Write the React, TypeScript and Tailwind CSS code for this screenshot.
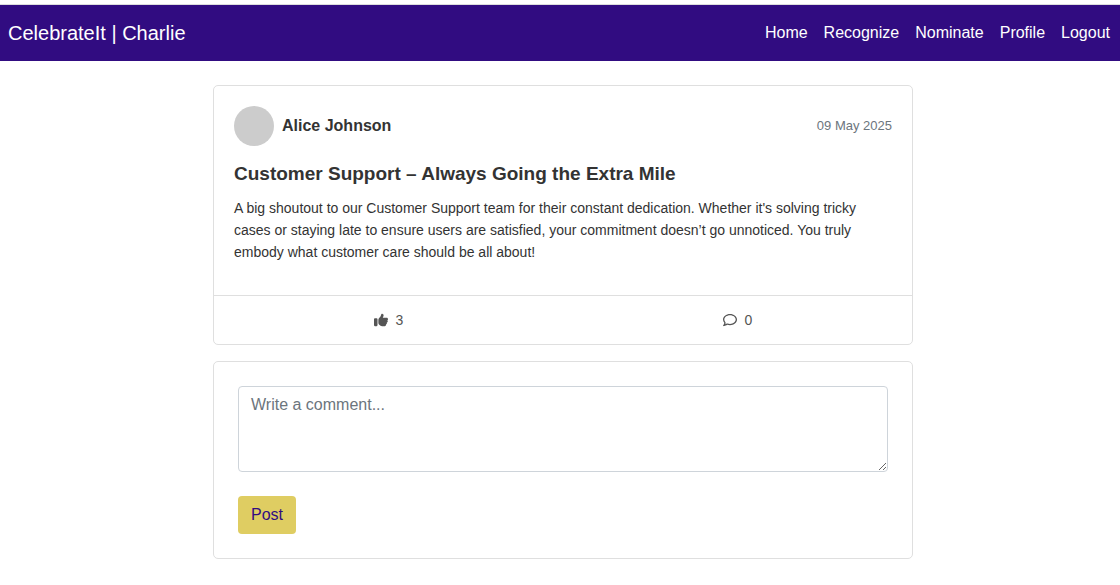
import { FaThumbsUp, FaRegComment } from "react-icons/fa6";

const links = ["Home", "Recognize", "Nominate", "Profile", "Logout"];

function Navbar() {
  return (
    <header className="flex items-center justify-between border-t border-[#dddddd] bg-[#310c81] px-2 py-3 text-white">
      <a href="#" className="text-xl leading-8">CelebrateIt | Charlie</a>
      <nav className="flex gap-4 pr-0.5">
        {links.map((l) => (
          <a key={l} href="#" className="text-base">{l}</a>
        ))}
      </nav>
    </header>
  );
}

function Post() {
  return (
    <article className="rounded-[5px] border border-[#dfdfdf] bg-white text-[#333333]">
      <div className="px-5 pt-5 pb-8">
        <div className="flex items-center gap-2">
          <span className="size-10 rounded-full bg-[#cccccc]" />
          <strong className="text-base">Alice Johnson</strong>
          <time dateTime="2025-05-09" className="ml-auto text-[13px] text-[#6c757d]">09 May 2025</time>
        </div>
        <h1 className="mt-4 text-[19px] leading-6 font-bold">Customer Support – Always Going the Extra Mile</h1>
        <p className="mt-[11px] text-sm leading-[22px]">
          A big shoutout to our Customer Support team for their constant dedication. Whether it's solving tricky cases or staying late to ensure users are satisfied, your commitment doesn’t go unnoticed. You truly embody what customer care should be all about!
        </p>
      </div>
      <div className="grid h-[49px] grid-cols-2 border-t border-[#dfdfdf] text-sm text-[#555555]">
        <button type="button" aria-label="Like, 3" className="flex items-center justify-center gap-2"><FaThumbsUp />3</button>
        <button type="button" aria-label="Comments, 0" className="flex items-center justify-center gap-2"><FaRegComment />0</button>
      </div>
    </article>
  );
}

function CommentForm() {
  return (
    <form className="mt-4 rounded-[5px] border border-[#dfdfdf] bg-white p-6" onSubmit={(e) => e.preventDefault()}>
      <textarea
        aria-label="Write a comment"
        placeholder="Write a comment..."
        rows={3}
        className="block w-full rounded border border-[#ced4da] px-3 py-1.5 text-base placeholder:text-[#6c757d]"
      />
      <button type="submit" className="mt-6 rounded bg-[#dfcd62] px-[13px] py-[7px] text-base text-[#310c81]">Post</button>
    </form>
  );
}

export default function App() {
  return (
    <div className="min-h-screen bg-white pt-1 font-['Liberation_Sans',Arial,sans-serif] text-[#212529]">
      <Navbar />
      <main className="pt-6 pl-1.5">
        <div className="mx-auto max-w-[700px]">
          <Post />
          <CommentForm />
        </div>
      </main>
    </div>
  );
}
